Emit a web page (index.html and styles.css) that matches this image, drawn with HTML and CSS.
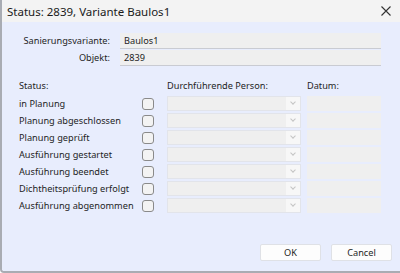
FILE: index.html
```html
<!DOCTYPE html>
<html lang="de">

<head>
  <meta charset="UTF-8" />
  <title>Status: 2839, Variante Baulos1</title>
  <link rel="stylesheet" href="styles.css">
</head>

<body>

  <div class="window">
    <div class="titlebar">
      <span class="title">Status: 2839, Variante Baulos1</span>
      <span class="close">
        <svg width="10" height="10" viewBox="0 0 10 10">
          <path d="M0.5 0.5 L9.5 9.5 M9.5 0.5 L0.5 9.5" stroke="#333" stroke-width="1.1" fill="none" />
        </svg>
      </span>
    </div>

    <div class="content">
      <div class="info">
        <label>Sanierungsvariante:</label>
        <div class="readonly">Baulos1</div>
        <label>Objekt:</label>
        <div class="readonly">2839</div>
      </div>

      <div class="status-grid">
        <div class="head">Status:</div>
        <div></div>
        <div class="head">Durchführende Person:</div>
        <div class="head">Datum:</div>

        <div class="name">in Planung</div>
        <span class="check"></span>
        <div class="combo"><span class="arrow"></span></div>
        <div class="date"></div>

        <div class="name">Planung abgeschlossen</div>
        <span class="check"></span>
        <div class="combo"><span class="arrow"></span></div>
        <div class="date"></div>

        <div class="name">Planung geprüft</div>
        <span class="check"></span>
        <div class="combo"><span class="arrow"></span></div>
        <div class="date"></div>

        <div class="name">Ausführung gestartet</div>
        <span class="check"></span>
        <div class="combo"><span class="arrow"></span></div>
        <div class="date"></div>

        <div class="name">Ausführung beendet</div>
        <span class="check"></span>
        <div class="combo"><span class="arrow"></span></div>
        <div class="date"></div>

        <div class="name">Dichtheitsprüfung erfolgt</div>
        <span class="check"></span>
        <div class="combo"><span class="arrow"></span></div>
        <div class="date"></div>

        <div class="name">Ausführung abgenommen</div>
        <span class="check"></span>
        <div class="combo"><span class="arrow"></span></div>
        <div class="date"></div>
      </div>

      <div class="buttons">
        <button>OK</button>
        <button>Cancel</button>
      </div>
    </div>
  </div>

</body>

</html>
```

FILE: styles.css
```css
body {
  margin: 0;
  padding: 0;
  font-family: "Noto Sans", "Open Sans", sans-serif;
  background: #ffffff;
}

.window {
  width: 400px;
  height: 273px;
  box-sizing: border-box;
  display: flex;
  flex-direction: column;
  border-left: 2px solid #a9acb3;
  border-bottom: 2px solid #a9acb3;
  border-bottom-left-radius: 4px;
  overflow: hidden;
}

.titlebar {
  height: 22px;
  flex: none;
  display: flex;
  align-items: center;
  justify-content: space-between;
  background-color: #f3f3f3;
  padding: 0 9px 0 5px;
}

.title {
  font-size: 11.5px;
  color: #1a1a1a;
}

.close {
  display: flex;
  align-items: center;
}

.content {
  flex: 1;
  background-color: #e8edfd;
  display: flex;
  flex-direction: column;
  font-size: 9.2px;
  color: #1e1e1e;
}

.info {
  display: grid;
  grid-template-columns: 108px 261px;
  column-gap: 10px;
  row-gap: 1px;
  margin-top: 11px;
}

.info label {
  text-align: right;
  line-height: 16px;
}

.readonly {
  height: 16px;
  line-height: 15px;
  box-sizing: border-box;
  background-color: #efefef;
  border-bottom: 1px solid #c9cbd2;
  padding-left: 4px;
}

.status-grid {
  display: grid;
  grid-template-columns: 123px 25px 140px 74px;
  grid-template-rows: 14px;
  grid-auto-rows: 15px;
  row-gap: 2px;
  margin: 14px 0 0 17px;
  align-items: center;
}

.head {
  align-self: start;
  line-height: 12px;
}

.check {
  width: 12px;
  height: 12px;
  box-sizing: border-box;
  border: 1px solid #8a8a8a;
  border-radius: 3px;
  background-color: #f3f3f3;
}

.combo {
  width: 134px;
  height: 15px;
  box-sizing: border-box;
  background-color: #efefef;
  border: 1px solid #e2e4ea;
  display: flex;
  justify-content: flex-end;
}

.arrow {
  width: 14px;
  height: 100%;
  background-color: #f7f7f7;
  position: relative;
}

.arrow::after {
  content: '';
  position: absolute;
  left: 5px;
  top: 3px;
  width: 3px;
  height: 3px;
  border-right: 1px solid #c4c4c4;
  border-bottom: 1px solid #c4c4c4;
  transform: rotate(45deg);
}

.date {
  height: 15px;
  background-color: #efefef;
}

.buttons {
  display: flex;
  justify-content: flex-end;
  gap: 10px;
  margin-top: auto;
  padding: 0 8px 10px 0;
}

button {
  width: 61px;
  height: 17px;
  padding: 0;
  font-family: "Noto Sans", "Open Sans", sans-serif;
  font-size: 9.2px;
  color: #1e1e1e;
  background-color: #fdfdfd;
  border: 1px solid #dfe1e6;
  border-radius: 2px;
}
```
